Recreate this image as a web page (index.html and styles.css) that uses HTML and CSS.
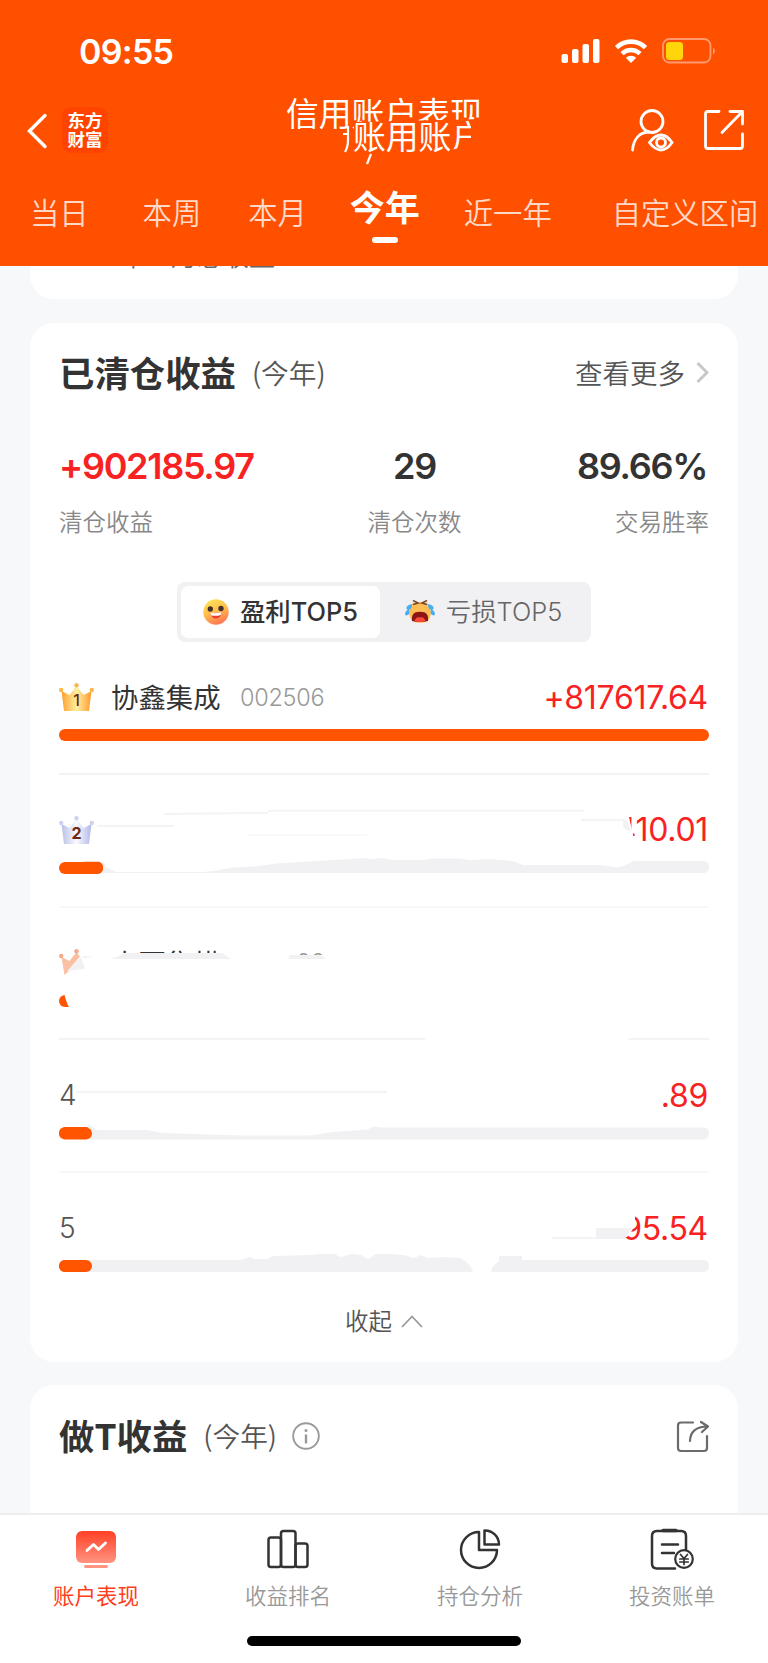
FILE: index.html
```html
<!DOCTYPE html>
<html lang="zh-CN">
<head>
    <meta charset="UTF-8">
    <meta name="viewport" content="width=device-width, initial-scale=1.0">
    <title>信用账户表现</title>
    <link rel="stylesheet" href="styles.css">
</head>
<body>
    <header class="header">
        <div class="status-bar">
            <span class="time">09:55</span>
            <svg class="status-icons" width="155" height="30" viewBox="560 36 155 30">
                <g fill="#fff">
                    <rect x="561.5" y="54" width="6.5" height="9" rx="2"/>
                    <rect x="572" y="49" width="6.5" height="14" rx="2"/>
                    <rect x="582.5" y="44" width="6.5" height="19" rx="2"/>
                    <rect x="593" y="39" width="6.5" height="24" rx="2"/>
                    <path d="M631 63l-5.2-5.2a7.6 7.6 0 0 1 10.4 0z"/>
                </g>
                <path d="M616.5 47.6a20.5 20.5 0 0 1 29 0M622 53.6a13 13 0 0 1 18 0" fill="none" stroke="#fff" stroke-width="4.6"/>
                <rect x="663" y="39" width="47.500" height="23.500" rx="6.500" fill="none" stroke="#ff9a70" stroke-width="1.800"/>
                <rect x="666" y="42" width="17" height="18" rx="3.500" fill="#ffd60a"/>
                <path d="M713 47.500q4 3.500 0 7z" fill="#ff9a70"/>
            </svg>
        </div>
        <div class="nav-bar">
            <svg class="back" width="22" height="36" viewBox="0 0 22 36"><path d="M19 2.500L3.500 18 19 33.500" fill="none" stroke="#fff" stroke-width="3.400" stroke-linecap="round"/></svg>
            <div class="logo">东方<br>财富</div>
            <h1 class="title">
                <span class="title-main">信用账户表现</span>
                <span class="title-ghost">账用账户</span>
                <svg class="title-marks" width="200" height="70" viewBox="284 95 200 70"><path d="M346 126v14q0 7-3 12M341 134h5M369 154l-4 10" fill="none" stroke="#fff" stroke-width="2.200"/></svg>
            </h1>
            <svg class="user" width="46" height="46" viewBox="630 108 46 46" fill="none" stroke="#fff" stroke-width="2.800" stroke-linecap="round">
                <circle cx="652" cy="121.500" r="11"/>
                <path d="M632.500 150c1-11 7-17.500 16-18"/>
                <path d="M649.500 142.500q5.500-7.500 11.500-7.500t11 7.500q-5 7.500-11 7.500t-11.500-7.500z"/>
                <circle cx="661" cy="142.500" r="4.500"/>
            </svg>
            <svg class="open" width="44" height="46" viewBox="702 108 44 46" fill="none" stroke="#fff" stroke-width="2.800" stroke-linecap="round" stroke-linejoin="round">
                <path d="M719 111.500h-11q-2.500 0-2.500 2.500v32q0 2.500 2.500 2.500h32q2.500 0 2.500-2.500v-12M730 111.500h12.500v12.500M742 112l-20 20.500"/>
            </svg>
        </div>
        <nav class="tabs">
            <a class="tab">当日</a>
            <a class="tab tab-week">本周</a>
            <a class="tab tab-month">本月</a>
            <a class="tab active">今年</a>
            <a class="tab tab-last">近一年</a>
            <a class="tab tab-custom">自定义区间</a>
        </nav>
    </header>

    <main class="content">
        <section class="card card-prev"><span class="prev-text">年一月总收益</span></section>

        <section class="card card-closed">
            <div class="card-head">
                <h2>已清仓收益</h2><span class="period">(今年)</span>
                <a class="more">查看更多<svg width="13" height="22" viewBox="0 0 13 22"><path d="M1.500 2L11 11.500 1.500 21" fill="none" stroke="#c8c8c8" stroke-width="3"/></svg></a>
            </div>
            <div class="stats">
                <div class="stat"><b class="red">+902185.97</b><span>清仓收益</span></div>
                <div class="stat center"><b>29</b><span>清仓次数</span></div>
                <div class="stat right"><b class="pct">89.66%</b><span>交易胜率</span></div>
            </div>
            <div class="switch">
                <div class="switch-item on">
                    <svg width="26" height="26" viewBox="0 0 26 26">
                        <defs><linearGradient id="face" x1="0" y1="0" x2=".4" y2="1"><stop offset="0" stop-color="#ffe95a"/><stop offset=".55" stop-color="#ffc04c"/><stop offset="1" stop-color="#ff7d52"/></linearGradient></defs>
                        <circle cx="13" cy="13" r="12.700" fill="url(#face)"/>
                        <circle cx="7.300" cy="10" r="2.700" fill="#45302d"/><circle cx="18" cy="9.500" r="2.700" fill="#45302d"/>
                        <path d="M7.500 13.500q5.500 1.500 11-.5-.5 6.500-5.500 6.500t-5.500-6z" fill="#e8402a"/>
                        <path d="M7.500 13.500q5.500 1.500 11-.5l-.8 3q-4.500 1.500-9.400.4z" fill="#fff"/>
                    </svg>
                    <span>盈利TOP5</span>
                </div>
                <div class="switch-item">
                    <svg width="30" height="26" viewBox="0 0 30 26">
                        <path d="M4 12Q4 3 15 3t11 9q0 12-11 12T4 12z" fill="#ffbd55"/>
                        <path d="M8 1.500l5 2.500-5 1.500M22 1.500l-5 2.500 5 1.500" fill="none" stroke="#7b4a2a" stroke-width="1.600"/>
                        <path d="M7 22q-1-6 3-8.500 5-1.500 10 0 4 2.500 3 8.500-8 2-16 0z" fill="#8d1515"/>
                        <path d="M9.500 22q1.500-5 5.500-3.500 4-1.500 5.500 3.500-5.500 2-11 0z" fill="#ff4a3d"/>
                        <path d="M7 5q-5 1-5.500 3.500T4 11q3-1 3-6zM4 10.500q-5 1.500-3.500 6 5 0 3.500-6zM23 5q5 1 5.500 3.500T26 11q-3-1-3-6zM26 10.500q5 1.500 3.500 6-5 0-3.500-6z" fill="#45aef5"/>
                    </svg>
                    <span>亏损TOP5</span>
                </div>
            </div>

            <div class="rank-list">
                <div class="rank">
                    <div class="rank-line">
                        <svg class="crown" width="35" height="28" viewBox="0 0 35 28">
                            <defs><linearGradient id="gold"><stop offset="0" stop-color="#ff9f2e"/><stop offset=".5" stop-color="#fff0a0"/><stop offset="1" stop-color="#ff9a2c"/></linearGradient></defs>
                            <path d="M2.500 8l8 4L17.500 3l7 9 8-4-2.500 20H5z" fill="url(#gold)"/>
                            <g fill="#f8b84c"><circle cx="2.200" cy="7" r="2.200"/><circle cx="17.500" cy="2.200" r="2.200"/><circle cx="32.800" cy="7" r="2.200"/></g>
                            <text x="17.500" y="23" class="crown-no thin">1</text>
                        </svg>
                        <span class="name">协鑫集成</span><span class="code">002506</span>
                        <span class="amount">+817617.64</span>
                    </div>
                    <div class="track"><div class="fill" style="width: 100%"></div></div>
                </div>
                <div class="rank">
                    <div class="rank-line">
                        <svg class="crown" width="35" height="28" viewBox="0 0 35 28">
                            <defs><linearGradient id="silver"><stop offset="0" stop-color="#b9bfe4"/><stop offset=".5" stop-color="#fafaff"/><stop offset="1" stop-color="#b3b8e6"/></linearGradient></defs>
                            <path d="M2.500 8l8 4L17.500 3l7 9 8-4-2.500 20H5z" fill="url(#silver)"/>
                            <g fill="#ccd2f0"><circle cx="2.200" cy="7" r="2.200"/><circle cx="17.500" cy="2.200" r="2.200"/><circle cx="32.800" cy="7" r="2.200"/></g>
                            <text x="17.500" y="23" class="crown-no">2</text>
                        </svg>
                        <span class="amount">410.01</span>
                    </div>
                    <div class="track bare"><div class="fill" style="width: 6.8%"></div></div>
                </div>
                <div class="rank">
                    <div class="rank-line">
                        <svg class="crown" width="35" height="28" viewBox="0 0 35 28">
                            <path d="M2.500 8l8 4L17.500 3l6 8-18 15z" fill="#fac0a4"/>
                            <g fill="#f7a98c"><circle cx="2.200" cy="7" r="2.200"/><circle cx="17.500" cy="2.200" r="2.200"/></g>
                        </svg>
                        <span class="name">中百集横</span><span class="code">002506</span>
                    </div>
                    <div class="track bare"><div class="fill" style="width: 5%"></div></div>
                </div>
                <div class="rank">
                    <div class="rank-line"><span class="no">4</span><span class="amount">.89</span></div>
                    <div class="track bare"><div class="fill" style="width: 5%"></div></div>
                </div>
                <div class="rank">
                    <div class="rank-line"><span class="no">5</span><span class="amount">95.54</span></div>
                    <div class="track bare"><div class="fill" style="width: 5%"></div></div>
                </div>

                <!-- hidden amounts and names -->
                <svg class="cover" width="650" height="650" viewBox="59 642 650 650">
                    <g fill="#fff">
                        <path d="M616 808h11l4 18 2 8v8h-17z"/>
                        <path d="M80 953h158v2h122v24H64l7-12 12-14z"/>
                        <path d="M238 940h62v20h-62z"/>
                        <path d="M64 990h41v22H72q-5-6-8-19z"/>
                        <path d="M425 1036h203v6H425z"/>
                        <path d="M616 1210h19v11q0 6-2 8l-6 8h-11z"/>
                    </g>
                    <g fill="#f1f1f3">
                        <path d="M103 862l3 5 10 5h87l14-1.500 16-3 20-1 24-3 40-2.500 34-2 12-1 8 1 12-1 7 2h34l9-1.500h25l12 1.500 20-1 22 2 11 4h77l18 2.500 10-3.500 6-3h69q6 0 6 6t-6 6H103z"/>
                        <path d="M67 971l14-14 4 12zM112 959l13-6h97l9 6zM288 959l2-4h30l6 4zM83 956l11 1-11 1z"/>
                        <path d="M88 1124l9 6h50l16 3 77 2.500h70l23-3.500 35-2.500 5-3 8 1h322q6 0 6 6t-6 6H88z"/>
                        <path d="M86 1260h154l10-3 5 2 12 0 6-3 37-1 10-1h14l7 3 10-3 10 1 7 4 8-5h15l13 1 10 3 7-3 7 3 16-1 16 1q10 4 13 14H86z"/>
                        <path d="M491 1272q1-7 8-11v-5h23v4h181q6 0 6 6t-6 6z"/>
                        <path d="M596 1228h36l-8 11h-28zM623 821l4-1 4 11q-5 0-8-5z"/>
                    </g>
                    <g fill="none" stroke="#f4f4f5" stroke-width="2">
                        <path d="M164 814l104-1M268 810.700h316M97 826h77M581 820h44M76 1092h311M552 1238h44"/>
                        <path d="M248 835h119" stroke="#f9f9fa"/>
                    </g>
                    <g fill="#ff5500">
                        <rect x="59" y="1127.400" width="33" height="12" rx="6"/>
                        <rect x="59" y="1260" width="33" height="12" rx="6"/>
                        <rect x="80" y="861.800" width="23" height="12" rx="5"/>
                    </g>
                </svg>
            </div>

            <div class="collapse">收起<svg width="22" height="14" viewBox="0 0 22 14"><path d="M1 12L11 1.500 21 12" fill="none" stroke="#999" stroke-width="1.800"/></svg></div>
        </section>

        <section class="card card-t">
            <div class="card-head">
                <h2>做T收益</h2><span class="period">(今年)</span>
                <svg class="info" width="28" height="28" viewBox="0 0 28 28"><circle cx="14" cy="14" r="12.800" fill="none" stroke="#999" stroke-width="1.900"/><circle cx="14" cy="8.500" r="1.500" fill="#999"/><path d="M14 12.500v9" stroke="#999" stroke-width="2.400"/></svg>
                <svg class="share" width="34" height="34" viewBox="0 0 34 34" fill="none" stroke="#6b6b6b" stroke-width="2.200" stroke-linecap="round"><path d="M18 2.500H6Q3 2.500 3 5.500V28q0 3 3 3h23q3 0 3-3V16M15 21c0-9 6-14.500 17.500-14.500M26 2l7 4.500-6 5.500"/></svg>
            </div>
        </section>
    </main>

    <footer class="tab-bar">
        <div class="tab-items">
            <div class="tab-item current">
                <svg width="44" height="44" viewBox="0 0 44 44">
                    <defs><linearGradient id="screen" x2="0" y2="1"><stop offset="0" stop-color="#ff4025"/><stop offset="1" stop-color="#ff9482"/></linearGradient></defs>
                    <rect x="2" y="3" width="40" height="32" rx="6" fill="url(#screen)"/>
                    <rect x="10" y="37" width="24" height="3" rx="1.500" fill="#ff9482"/>
                    <path d="M13 22.500l6.500-6 5 5 7-6.500" fill="none" stroke="#fff" stroke-width="2.800" stroke-linecap="round" stroke-linejoin="round"/>
                </svg>
                <span>账户表现</span>
            </div>
            <div class="tab-item">
                <svg width="44" height="44" viewBox="0 0 44 44" fill="none" stroke="#333" stroke-width="2.500"><rect x="2.500" y="9.500" width="12.500" height="29.500" rx="2.500"/><rect x="15" y="3" width="14.500" height="36" rx="2.500"/><rect x="29.500" y="15.500" width="12" height="23.500" rx="2.500"/></svg>
                <span>收益排名</span>
            </div>
            <div class="tab-item">
                <svg width="44" height="44" viewBox="0 0 44 44" fill="none" stroke="#333" stroke-width="2.500" stroke-linejoin="round"><path d="M21 4A18 18 0 1 0 39 22H21z"/><path d="M26.500 2.500v14H41A14 14 0 0 0 26.500 2.500z"/></svg>
                <span>持仓分析</span>
            </div>
            <div class="tab-item">
                <svg width="44" height="44" viewBox="0 0 44 44" fill="none" stroke="#333" stroke-width="2.500" stroke-linecap="round"><path d="M25 40.500H7q-5 0-5-5V8q0-5 5-5h24q5 0 5 5v13"/><path d="M13 2.500h13" stroke-width="3.500"/><path d="M12 16.500h16M12 25h12"/><circle cx="34" cy="31" r="8.800" stroke-width="2.200"/><path d="M30.500 26.500l3.500 4 3.500-4M34 30.500v6M29.800 31h8.400M29.800 34h8.400" stroke-width="1.700"/></svg>
                <span>投资账单</span>
            </div>
        </div>
        <div class="home-indicator"></div>
    </footer>
</body>
</html>
```

FILE: styles.css
```css
* {
    box-sizing: border-box;
}
body {
    margin: 0;
    width: 768px;
    height: 1663px;
    display: flex;
    flex-direction: column;
    overflow: hidden;
    background-color: #f6f8fa;
    font-family: Inter, "Noto Sans CJK SC", sans-serif;
    color: #333;
}
svg {
    display: block;
    flex: none;
}
h1, h2 {
    margin: 0;
}
.header {
    height: 266px;
    flex: none;
    background-color: #ff5000;
    color: #fff;
}
.status-bar {
    height: 95px;
    display: flex;
    align-items: center;
    justify-content: space-between;
    padding: 7px 53px 0 79px;
}
.time {
    font-size: 34px;
    font-weight: 580;
    letter-spacing: -0.7px;
}
.nav-bar {
    height: 72px;
    display: flex;
    align-items: center;
    padding: 0 22px 0 26px;
}
.logo {
    width: 46px;
    height: 46px;
    margin: -2px 0 0 14px;
    padding-top: 3px;
    border-radius: 9px;
    background-color: #ff4400;
    font-family: "Noto Sans CJK SC", sans-serif;
    font-size: 17.5px;
    font-weight: 700;
    line-height: 19px;
    text-align: center;
}
.title {
    position: relative;
    width: 200px;
    height: 72px;
    margin: 0 auto 0 178px;
    font-family: "Noto Sans CJK SC", sans-serif;
    font-size: 32.8px;
    font-weight: 400;
    line-height: 34px;
    white-space: nowrap;
}
.title-main {
    display: block;
    clip-path: polygon(0 -4px, 100% -4px, 100% 24px, 68px 27px, 68px 100%, 0 100%);
}
.title-ghost {
    position: absolute;
    left: 67px;
    top: 23px;
    clip-path: polygon(0 3px, 118px 3px, 118px 27px, 98px 32px, 98px 100%, 0 100%);
}
.title-marks {
    position: absolute;
    left: 0;
    top: 0;
}
.user {
    margin-right: 26px;
}
.tabs {
    height: 99px;
    display: flex;
    align-items: flex-start;
    padding: 22px 0 0 30px;
    font-family: "Noto Sans CJK SC", sans-serif;
    font-size: 29.3px;
    font-weight: 350;
    line-height: 44px;
    white-space: nowrap;
    color: #ffd9c8;
}
.tab-week {
    margin-left: 54px;
}
.tab-month {
    margin-left: 47px;
}
.tab-last {
    margin-left: 44px;
}
.tab-custom {
    margin-left: 60px;
}
.tab.active {
    margin-left: 43px;
    margin-top: -5px;
    font-size: 35px;
    font-weight: 700;
    color: #fff;
}
.tab.active::after {
    content: "";
    display: block;
    width: 26px;
    height: 6px;
    margin: 9px auto 0;
    border-radius: 3px;
    background-color: #fff;
}
.content {
    flex: 1;
    min-height: 0;
    padding: 0 30px;
    overflow: hidden;
}
.card {
    background-color: #fff;
    border-radius: 24px;
    padding: 0 29px;
}
.card-prev {
    height: 33px;
    border-radius: 0 0 24px 24px;
    overflow: hidden;
}
.prev-text {
    display: block;
    margin: -25px 0 0 60px;
    font-size: 26px;
    line-height: 32px;
    font-weight: 350;
    color: #666;
}
.card-closed {
    height: 1039px;
    margin-top: 24px;
}
.card-head {
    height: 100px;
    display: flex;
    align-items: center;
    font-family: "Noto Sans CJK SC", sans-serif;
}
h2 {
    margin-top: -2px;
    font-size: 35.4px;
    font-weight: 700;
    line-height: 40px;
}
.period {
    margin: -2px 0 0 16px;
    font-size: 27.7px;
    font-weight: 350;
    color: #555;
}
.more {
    display: flex;
    align-items: center;
    gap: 11px;
    margin: -2px 0 0 auto;
    font-size: 27.5px;
    font-weight: 350;
    color: #555;
}
.stats {
    height: 159px;
    display: flex;
    justify-content: space-between;
    padding-top: 21px;
}
.stat {
    width: 216px;
    display: flex;
    flex-direction: column;
}
.stat.center {
    align-items: center;
    padding-left: 61px;
}
.stat.right {
    align-items: flex-end;
}
.stat b {
    font-size: 36px;
    font-weight: 570;
    line-height: 44px;
    letter-spacing: -1.3px;
}
.stat b.pct {
    margin-right: 2px;
}
.stat span {
    margin-top: 19px;
    font-size: 23.5px;
    font-weight: 350;
    line-height: 32px;
    color: #888;
}
.red {
    color: #f82222;
}
.switch {
    width: 414px;
    height: 60px;
    margin: 0 auto;
    padding: 4px;
    display: flex;
    border-radius: 8px;
    background-color: #f1f1f4;
    font-size: 25.4px;
    font-weight: 350;
    line-height: 32px;
    color: #666;
}
.switch-item {
    flex: 1;
    display: flex;
    align-items: center;
    justify-content: center;
    gap: 11px;
    border-radius: 7px;
}
.switch-item span {
    margin-top: -1px;
}
.switch-item.on {
    flex: none;
    width: 199px;
    background-color: #fff;
    font-weight: 500;
    color: #333;
}
.rank-list {
    position: relative;
    height: 650px;
}
.rank {
    height: 132.8px;
    padding-top: 37px;
    border-bottom: 2px solid #f4f4f5;
}
.rank:nth-child(even) {
    border-bottom-color: #f8f8f9;
}
.rank:nth-child(5) {
    border-bottom: 0;
}
.rank-line {
    height: 36px;
    display: flex;
    align-items: center;
}
.name {
    width: 129px;
    margin: -2px 0 0 17px;
    font-family: "Noto Sans CJK SC", sans-serif;
    font-size: 27.4px;
    line-height: 36px;
}
.code {
    font-size: 23.5px;
    font-weight: 350;
    letter-spacing: -0.3px;
    color: #999;
}
.no {
    font-size: 28px;
    font-weight: 350;
    color: #555;
}
.amount {
    margin-left: auto;
    padding-right: 1px;
    font-size: 32px;
    font-weight: 370;
    letter-spacing: -0.3px;
    color: #f82222;
}
.track {
    height: 12px;
    margin-top: 14px;
    border-radius: 6px;
    background-color: #f1f1f3;
}
.track.bare {
    background-color: transparent;
}
.fill {
    height: 12px;
    border-radius: 6px;
    background-color: #ff5500;
}
.cover {
    position: absolute;
    left: 0;
    top: 0;
}
.crown-no {
    font-size: 16px;
    font-weight: 700;
    text-anchor: middle;
    fill: #6b2a14;
}
.crown-no.thin {
    font-weight: 500;
}
.collapse {
    display: flex;
    align-items: center;
    justify-content: center;
    gap: 9px;
    margin-top: 13px;
    font-size: 23.5px;
    font-weight: 350;
    line-height: 34px;
    color: #555;
}
.card-t {
    height: 160px;
    margin-top: 23px;
}
.card-t .card-head {
    height: 103px;
}
.card-t h2 {
    margin-top: -4px;
}
.card-t .period {
    margin-top: -3px;
}
.info {
    margin: -1px 0 0 15px;
}
.share {
    margin-left: auto;
}
.tab-bar {
    height: 150px;
    flex: none;
    border-top: 2px solid #ededf0;
    background-color: #fff;
}
.tab-items {
    height: 121px;
    display: flex;
    padding-top: 13px;
}
.tab-item {
    width: 192px;
    display: flex;
    flex-direction: column;
    align-items: center;
    gap: 7px;
    font-family: "Noto Sans CJK SC", sans-serif;
    font-size: 21.5px;
    font-weight: 350;
    line-height: 32px;
    color: #999;
}
.tab-item.current {
    font-weight: 400;
    color: #ff3d20;
}
.home-indicator {
    width: 274px;
    height: 10px;
    margin: 0 auto;
    border-radius: 5px;
    background-color: #000;
}
```
